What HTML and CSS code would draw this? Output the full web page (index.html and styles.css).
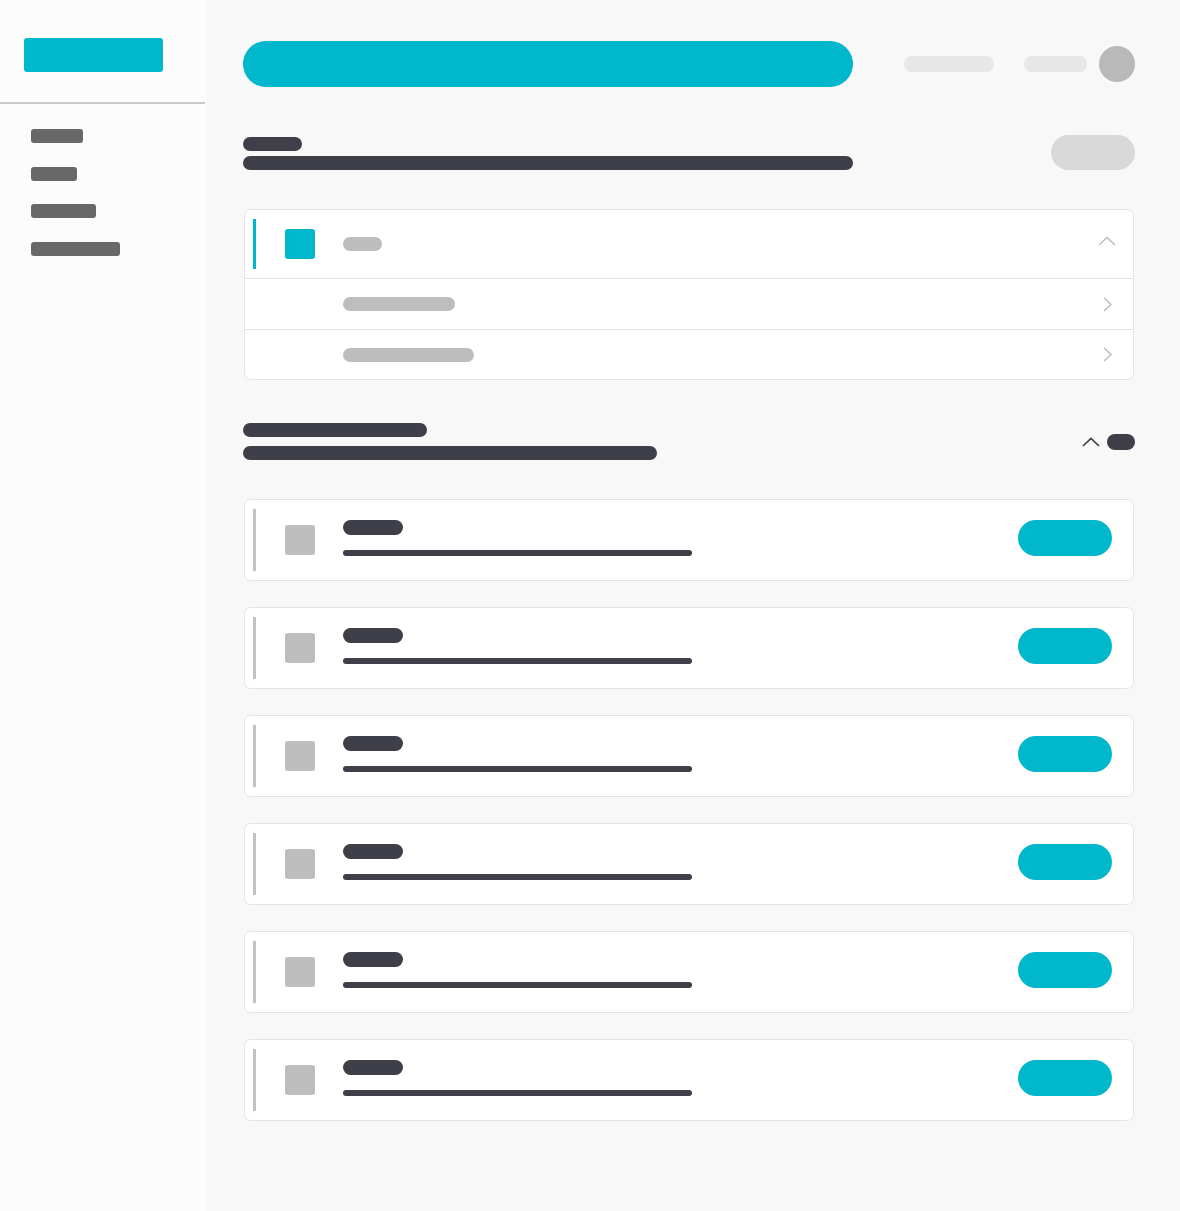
FILE: index.html
```html
<!DOCTYPE html>
<html lang="en">
<head>
<meta charset="utf-8">
<title>Dashboard</title>
<link rel="stylesheet" href="styles.css">
</head>
<body>
<div class="app">
  <aside class="sidebar">
    <div class="brand"><div class="logo"></div></div>
    <nav class="nav">
      <span class="nav-item w1"></span>
      <span class="nav-item w2"></span>
      <span class="nav-item w3"></span>
      <span class="nav-item w4"></span>
    </nav>
  </aside>
  <main class="main">
    <header class="topbar">
      <div class="search"></div>
      <div class="top-right">
        <span class="ghost ghost-a"></span>
        <span class="ghost ghost-b"></span>
        <span class="avatar"></span>
      </div>
    </header>

    <section class="page-head">
      <div class="head-text">
        <div class="bar-dark head-title"></div>
        <div class="bar-dark head-sub"></div>
      </div>
      <div class="head-btn"></div>
    </section>

    <section class="accordion">
      <div class="acc-head">
        <span class="accent"></span>
        <span class="acc-icon"></span>
        <span class="acc-label"></span>
        <svg class="chev chev-up" width="18" height="10" viewBox="0 0 18 10"><polyline points="1,9 9,1.5 17,9" fill="none" stroke="#bdbdbd" stroke-width="1.5"/></svg>
      </div>
      <div class="acc-row">
        <span class="row-label w112"></span>
        <svg class="chev" width="11" height="15" viewBox="0 0 11 15"><polyline points="2,1 9,7.5 2,14" fill="none" stroke="#bdbdbd" stroke-width="1.5"/></svg>
      </div>
      <div class="acc-row last">
        <span class="row-label w131"></span>
        <svg class="chev" width="11" height="15" viewBox="0 0 11 15"><polyline points="2,1 9,7.5 2,14" fill="none" stroke="#bdbdbd" stroke-width="1.5"/></svg>
      </div>
    </section>

    <section class="section-head">
      <div class="head-text">
        <div class="bar-dark sec-title"></div>
        <div class="bar-dark sec-sub"></div>
      </div>
      <div class="sec-tools">
        <svg class="sec-chev" width="18" height="10" viewBox="0 0 18 10"><polyline points="1,9 9,1.5 17,9" fill="none" stroke="#3e3f48" stroke-width="1.7"/></svg>
        <span class="sec-pill"></span>
      </div>
    </section>

    <section class="list">
      <div class="item"><span class="item-bar"></span><span class="item-icon"></span><div class="item-text"><span class="item-title"></span><span class="item-desc"></span></div><span class="item-btn"></span></div>
      <div class="item"><span class="item-bar"></span><span class="item-icon"></span><div class="item-text"><span class="item-title"></span><span class="item-desc"></span></div><span class="item-btn"></span></div>
      <div class="item"><span class="item-bar"></span><span class="item-icon"></span><div class="item-text"><span class="item-title"></span><span class="item-desc"></span></div><span class="item-btn"></span></div>
      <div class="item"><span class="item-bar"></span><span class="item-icon"></span><div class="item-text"><span class="item-title"></span><span class="item-desc"></span></div><span class="item-btn"></span></div>
      <div class="item"><span class="item-bar"></span><span class="item-icon"></span><div class="item-text"><span class="item-title"></span><span class="item-desc"></span></div><span class="item-btn"></span></div>
      <div class="item"><span class="item-bar"></span><span class="item-icon"></span><div class="item-text"><span class="item-title"></span><span class="item-desc"></span></div><span class="item-btn"></span></div>
    </section>
  </main>
</div>
</body>
</html>
```

FILE: styles.css
```css
html, body {
  margin: 0;
  padding: 0;
}
body {
  background: #f8f8f8;
  font-family: "Liberation Sans", Arial, sans-serif;
}
.app {
  display: flex;
  min-height: 1211px;
}

/* Sidebar */
.sidebar {
  width: 207px;
  flex: none;
  background: #fcfcfc;
}
.brand {
  width: 205px;
  height: 104px;
  box-sizing: border-box;
  padding: 38px 0 0 24px;
  border-bottom: 2px solid #c9c9c9;
}
.logo {
  width: 139px;
  height: 34px;
  border-radius: 3px;
  background: #00b7cb;
}
.nav {
  display: flex;
  flex-direction: column;
  align-items: flex-start;
  gap: 23.5px;
  padding: 25px 0 0 31px;
}
.nav-item {
  display: block;
  height: 14px;
  border-radius: 3px;
  background: #686868;
}
.nav-item.w1 { width: 52px; }
.nav-item.w2 { width: 46px; }
.nav-item.w3 { width: 65px; }
.nav-item.w4 { width: 89px; }

/* Main */
.main {
  flex: 1;
  padding: 41px 45px 60px 36px;
  min-width: 0;
}
.topbar {
  display: flex;
  align-items: center;
  justify-content: space-between;
  height: 46px;
}
.search {
  width: 610px;
  height: 46px;
  border-radius: 23px;
  background: #00b7cb;
}
.top-right {
  display: flex;
  align-items: center;
}
.ghost {
  display: block;
  height: 16px;
  border-radius: 8px;
  background: #e7e7e7;
}
.ghost-a { width: 90px; margin-right: 30px; }
.ghost-b { width: 63px; margin-right: 12px; }
.avatar {
  display: block;
  width: 36px;
  height: 36px;
  border-radius: 50%;
  background: #b9b9b9;
}

.bar-dark {
  background: #3e3f48;
}
.page-head {
  margin-top: 48px;
  display: flex;
  justify-content: space-between;
  align-items: flex-end;
}
.head-title {
  width: 59px;
  height: 14px;
  border-radius: 7px;
}
.head-sub {
  width: 610px;
  height: 14px;
  border-radius: 7px;
  margin-top: 5px;
}
.head-btn {
  width: 84px;
  height: 35px;
  border-radius: 18px;
  background: #d9d9d9;
}

/* Accordion */
.accordion {
  margin: 39px 1px 0 1px;
  background: #fff;
  border: 1px solid #e4e4e4;
  border-radius: 7px;
}
.acc-head {
  height: 68px;
  display: flex;
  align-items: center;
  padding: 0 17px 0 8px;
}
.accent {
  display: block;
  width: 3px;
  height: 50px;
  background: #00b7cb;
}
.acc-icon {
  display: block;
  width: 30px;
  height: 30px;
  border-radius: 3px;
  background: #00b7cb;
  margin-left: 29px;
}
.acc-label {
  display: block;
  width: 39px;
  height: 14px;
  border-radius: 7px;
  background: #bdbdbd;
  margin-left: 28px;
}
.chev {
  margin-left: auto;
  display: block;
}
.chev-up {
  margin-top: -6px;
}
.acc-row {
  height: 50px;
  border-top: 1px solid #e4e4e4;
  display: flex;
  align-items: center;
  padding: 0 20px 0 98px;
}
.acc-row.last {
  height: 49px;
}
.row-label {
  display: block;
  height: 14px;
  border-radius: 7px;
  background: #bdbdbd;
}
.row-label.w112 { width: 112px; }
.row-label.w131 { width: 131px; }

/* Section 2 */
.section-head {
  margin-top: 43px;
  display: flex;
  justify-content: space-between;
  align-items: center;
}
.sec-title {
  width: 184px;
  height: 14px;
  border-radius: 7px;
}
.sec-sub {
  width: 414px;
  height: 14px;
  border-radius: 7px;
  margin-top: 9px;
}
.sec-tools {
  display: flex;
  align-items: center;
}
.sec-chev {
  display: block;
  margin-right: 7px;
  margin-top: 1px;
}
.sec-pill {
  display: block;
  width: 28px;
  height: 16px;
  border-radius: 8px;
  background: #3e3f48;
}

/* List */
.list {
  margin: 39px 1px 0 1px;
  display: flex;
  flex-direction: column;
  gap: 26px;
}
.item {
  height: 82px;
  box-sizing: border-box;
  background: #fff;
  border: 1px solid #e4e4e4;
  border-radius: 7px;
  display: flex;
  align-items: center;
  padding: 0 21px 0 8px;
}
.item-bar {
  display: block;
  width: 3px;
  height: 62px;
  background: #c2c2c2;
}
.item-icon {
  display: block;
  width: 30px;
  height: 30px;
  border-radius: 3px;
  background: #bdbdbd;
  margin-left: 29px;
}
.item-text {
  margin-left: 28px;
  display: flex;
  flex-direction: column;
  margin-top: -4px;
}
.item-title {
  display: block;
  width: 60px;
  height: 15px;
  border-radius: 8px;
  background: #3e3f48;
}
.item-desc {
  display: block;
  width: 349px;
  height: 6px;
  border-radius: 3px;
  background: #3e3f48;
  margin-top: 15px;
}
.item-btn {
  display: block;
  margin-left: auto;
  width: 94px;
  height: 36px;
  border-radius: 18px;
  background: #00b7cb;
  margin-top: -4px;
}
```
